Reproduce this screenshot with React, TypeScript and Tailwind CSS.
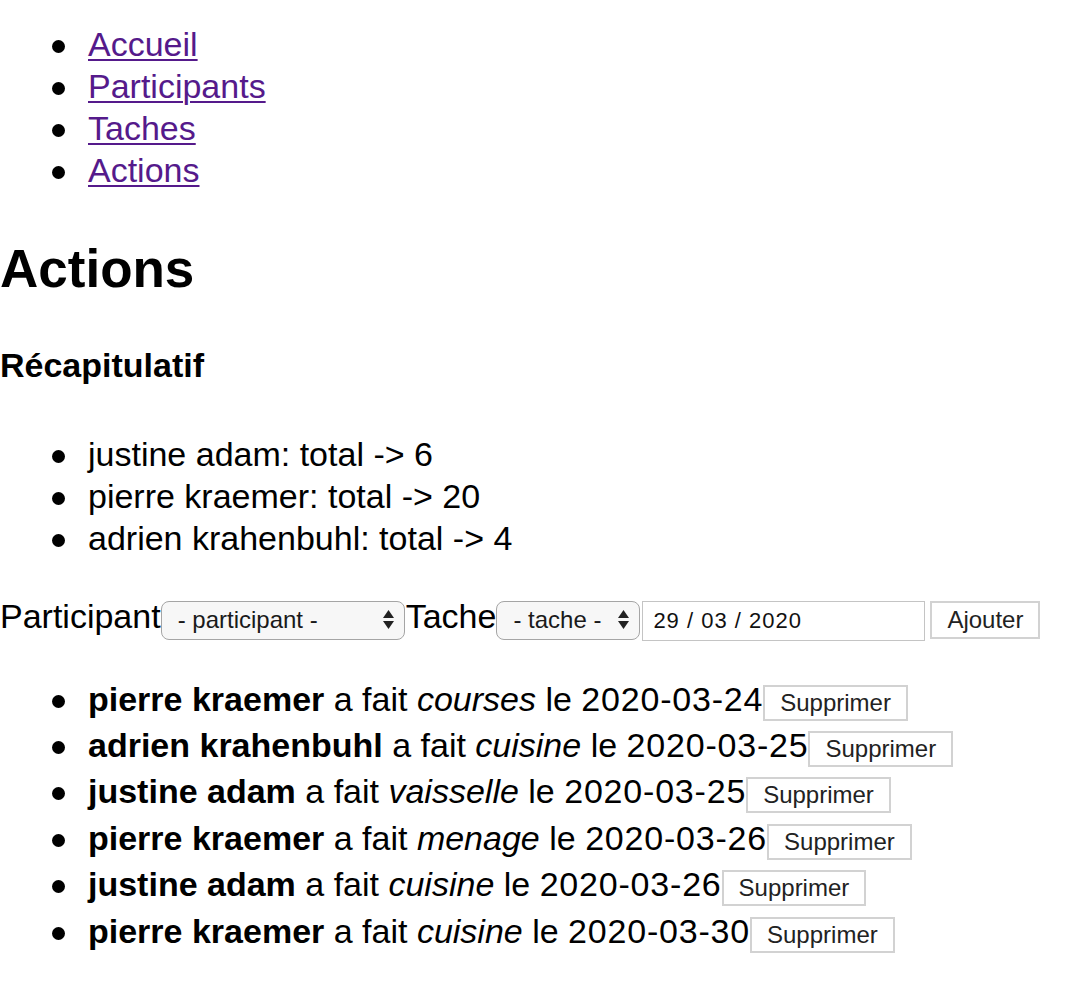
import React from "react";

const navLinks = ["Accueil", "Participants", "Taches", "Actions"];

const totals = [
	{ name: "justine adam", total: 6 },
	{ name: "pierre kraemer", total: 20 },
	{ name: "adrien krahenbuhl", total: 4 },
];

const actions = [
	{ who: "pierre kraemer", task: "courses", date: "2020-03-24" },
	{ who: "adrien krahenbuhl", task: "cuisine", date: "2020-03-25" },
	{ who: "justine adam", task: "vaisselle", date: "2020-03-25" },
	{ who: "pierre kraemer", task: "menage", date: "2020-03-26" },
	{ who: "justine adam", task: "cuisine", date: "2020-03-26" },
	{ who: "pierre kraemer", task: "cuisine", date: "2020-03-30" },
];

function Bullet() {
	return (
		<span className="flex w-[88px] flex-none">
			<span className="ml-[52px] mt-[4px] h-[13px] w-[13px] rounded-full bg-black" />
		</span>
	);
}

function SelectArrows() {
	return (
		<svg
			width="11"
			height="20"
			viewBox="0 0 11 20"
			className="pointer-events-none absolute right-[11px] top-1/2 -translate-y-1/2"
		>
			<path d="M5.5 0 L11 8 L0 8 Z" fill="#222" />
			<path d="M0 11 L11 11 L5.5 19 Z" fill="#222" />
		</svg>
	);
}

function FakeSelect({ label, width }: { label: string; width: string }) {
	return (
		<span className="relative inline-flex">
			<select
				defaultValue=""
				className={`${width} h-[39px] appearance-none rounded-[8px] border-[1.5px] border-[#a5a5a5] bg-[#f7f7f7] pl-[16px] text-[24px] leading-[36px] text-[#1a1a1a] outline-none`}
			>
				<option value="">{label}</option>
			</select>
			<SelectArrows />
		</span>
	);
}

export default function App() {
	return (
		<div className="font-['Liberation_Sans',Arial,sans-serif] text-[34px] leading-[42px] text-black">
			<ul className="pt-[23px]">
				{navLinks.map((link) => (
					<li key={link} className="flex h-[42px] items-center">
						<Bullet />
						<a href="#" className="text-[#551a8b] underline decoration-[2px] underline-offset-[3px]">
							{link}
						</a>
					</li>
				))}
			</ul>

			<h1 className="mt-[51px] text-[53px] font-bold leading-none">Actions</h1>

			<h3 className="mt-[53px] text-[34px] font-bold leading-none">Récapitulatif</h3>

			<ul className="mt-[51px]">
				{totals.map((t) => (
					<li key={t.name} className="flex h-[42px] items-center">
						<Bullet />
						<span>{`${t.name}: total -> ${t.total}`}</span>
					</li>
				))}
			</ul>

			<form className="mt-[36px] flex items-baseline" onSubmit={(e) => e.preventDefault()}>
				<span>Participant</span>
				<FakeSelect label="- participant -" width="w-[244px]" />
				<span className="ml-[1px]">Tache</span>
				<FakeSelect label="- tache -" width="w-[144px]" />
				<input
					type="text"
					defaultValue="29 / 03 / 2020"
					className="ml-[2px] h-[40px] w-[283px] border-[1.5px] border-[#c4c4c4] bg-white pl-[10px] text-[22px] tracking-[1px] text-[#111] outline-none"
				/>
				<button
					type="submit"
					className="ml-[5px] h-[38px] border-2 border-[#d2d2d2] bg-white px-[15px] text-[24px] leading-[34px] text-[#222]"
				>
					Ajouter
				</button>
			</form>

			<ul className="mt-[35px]">
				{actions.map((a, i) => (
					<li key={i} className="flex h-[46.4px] items-center">
						<Bullet />
						<span className="flex items-baseline">
							<span>
								<b>{a.who}</b> a fait <i>{a.task}</i> le <span className="tracking-[0.8px]">{a.date}</span>
							</span>
							<button
								type="button"
								className="h-[36px] border-2 border-[#d2d2d2] bg-white px-[15px] text-[24px] leading-[32px] text-[#222]"
							>
								Supprimer
							</button>
						</span>
					</li>
				))}
			</ul>
		</div>
	);
}
